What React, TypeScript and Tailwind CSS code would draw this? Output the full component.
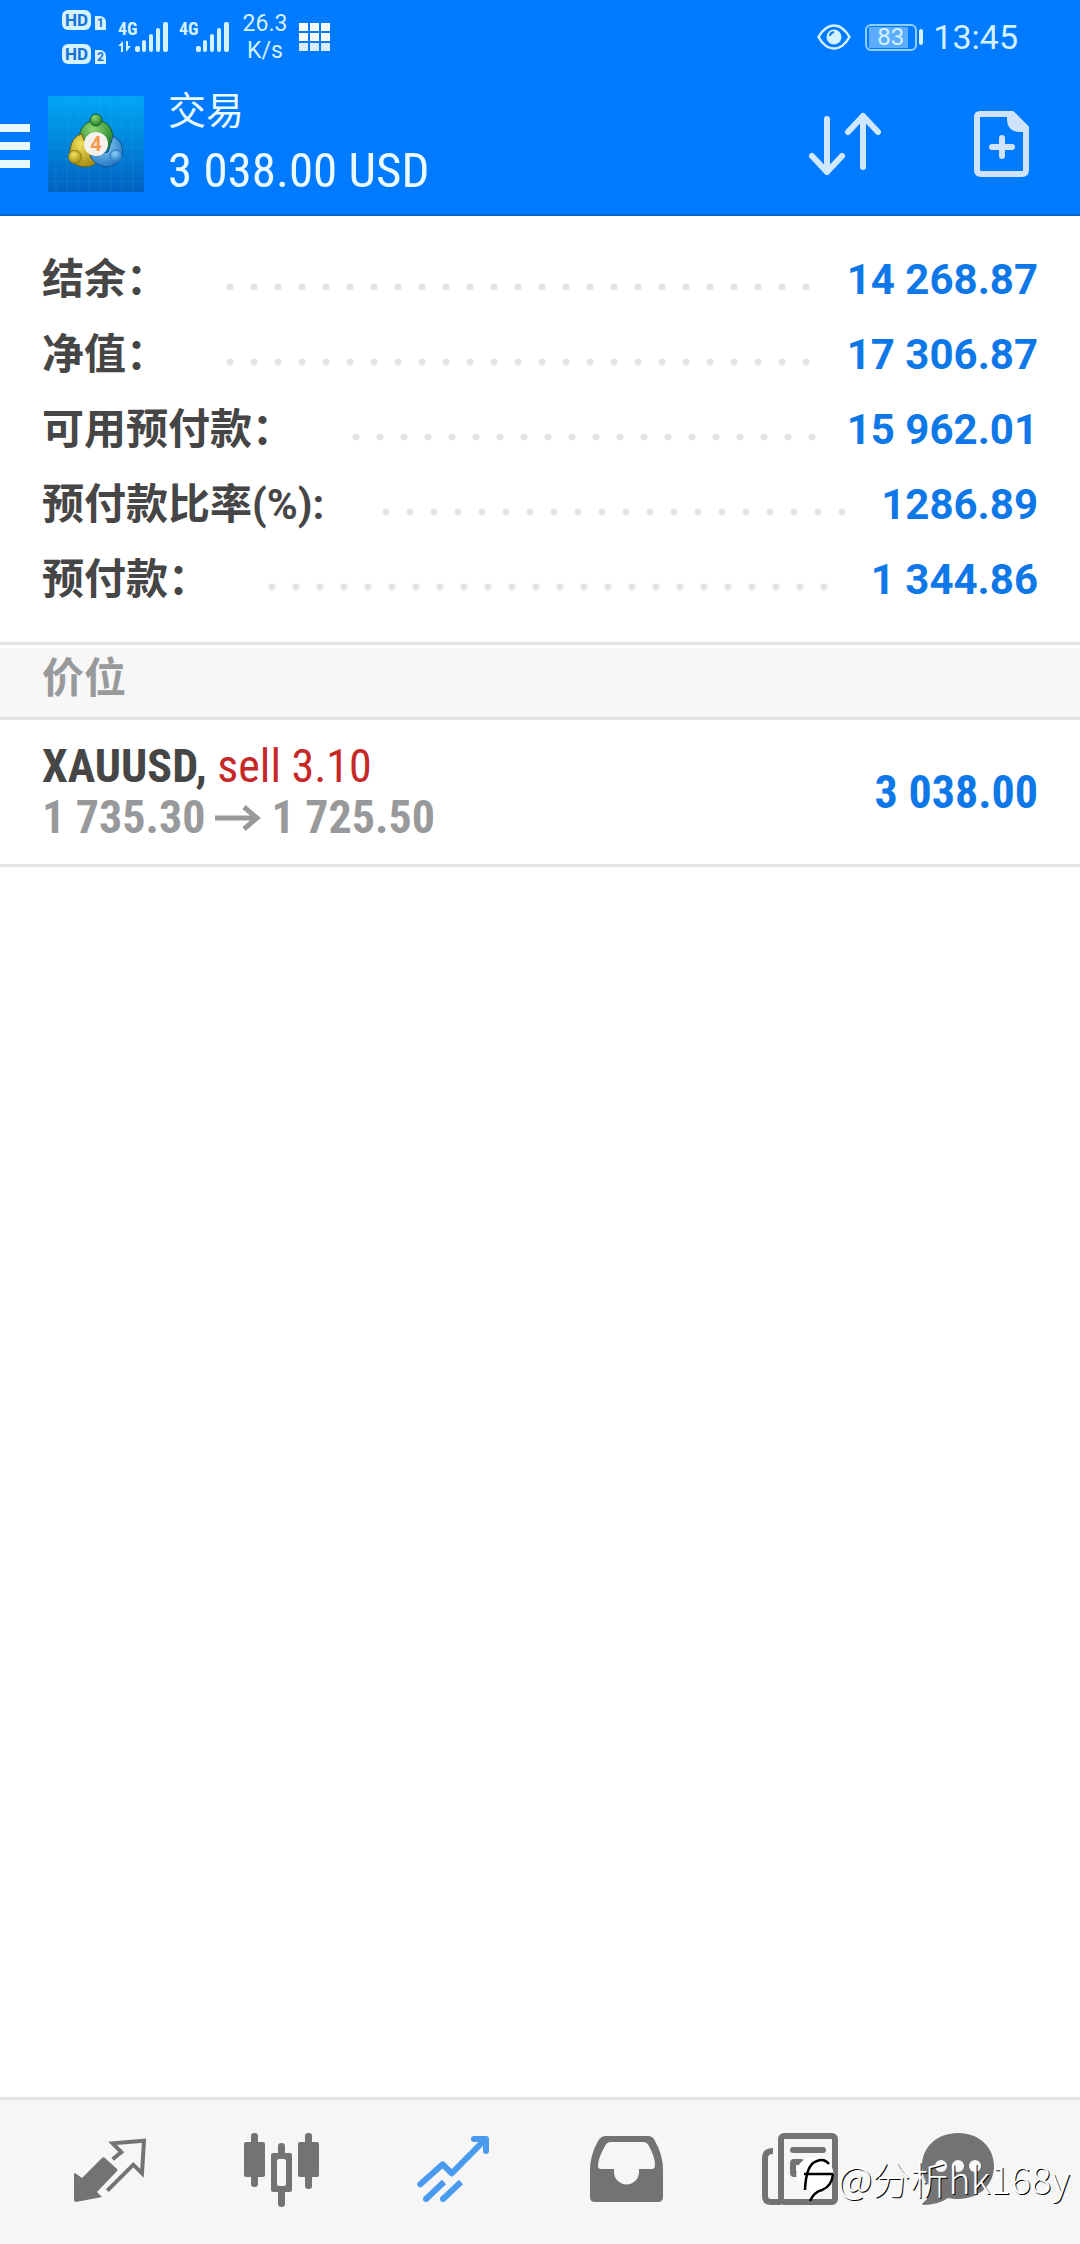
import type { ReactNode } from "react";

const SUMMARY = [
  { label: "结余：", value: "14 268.87" },
  { label: "净值：", value: "17 306.87" },
  { label: "可用预付款：", value: "15 962.01" },
  { label: "预付款比率(%):", value: "1286.89" },
  { label: "预付款：", value: "1 344.86" },
];

const POSITIONS = [
  { symbol: "XAUUSD", side: "sell 3.10", open: "1 735.30", current: "1 725.50", profit: "3 038.00" },
];

function HdBadge({ sim }: { sim: string }) {
  return (
    <div className="flex items-end gap-1">
      <span className="flex h-5 w-[29px] items-center justify-center rounded-md bg-[#d4f1ff] text-[17px] font-bold leading-5 text-[#1473d6]">
        HD
      </span>
      <span className="flex h-[14px] w-[11px] items-center justify-center rounded-tr-md bg-[#d4f1ff] text-[12px] font-bold leading-[14px] text-[#1473d6]">
        {sim}
      </span>
    </div>
  );
}

function Signal({ active }: { active?: boolean }) {
  return (
    <svg viewBox="0 -4 50 40" className="h-10 w-[50px]" fill="#d4f1ff">
      <text x="0" y="14" fontSize="18" fontWeight="700" className="font-['Roboto_Condensed','Liberation_Sans_Narrow',Roboto,sans-serif]">
        4G
      </text>
      {active && <path d="M0 25l5-5v11H3v-6zM8 20v11l5-6H10v-5z" />}
      <rect x="17" y="25" width="5" height="6" rx="2" />
      <rect x="24" y="19" width="4" height="12" rx="2" />
      <rect x="31" y="13" width="4" height="18" rx="2" />
      <rect x="38" y="7" width="4" height="24" rx="2" />
      <rect x="45" y="1" width="5" height="30" rx="2" />
    </svg>
  );
}

function StatusBar() {
  return (
    <div className="flex h-[74px] items-center justify-between px-[62px] text-[#d4f1ff]">
      <div className="flex items-center">
        <div className="flex flex-col gap-[14px]">
          <HdBadge sim="1" />
          <HdBadge sim="2" />
        </div>
        <div className="ml-3 flex gap-[11px]">
          <Signal active />
          <Signal />
        </div>
        <div className="ml-3 w-12 text-center text-[23px] leading-[27px]">
          26.3
          <br />
          K/s
        </div>
        <svg viewBox="0 0 32 29" className="ml-[10px] h-[29px] w-8" fill="#ffffff">
          {[0, 10, 20].map((y) =>
            [0, 11, 22].map((x) => (
              <rect key={`${x}-${y}`} x={x} y={y} width="9" height="8" opacity={y === 20 ? 0.85 : 1} />
            ))
          )}
        </svg>
      </div>
      <div className="flex items-center">
        <svg viewBox="0 0 34 26" className="h-[26px] w-[34px]" fill="none" stroke="#d4f1ff" strokeWidth="2.500">
          <path d="M1.500 13Q8 1.500 17 1.500T32.500 13Q26 24.500 17 24.500T1.500 13Z" />
          <circle cx="17" cy="13" r="7.500" fill="#d4f1ff" stroke="none" />
          <path d="M13 12q0-3 4-4" stroke="#007aff" strokeWidth="2" />
        </svg>
        <div className="ml-[14px] flex h-[27px] w-[52px] items-center rounded-md border-2 border-[#8fcfff] px-[2px]">
          <div className="flex h-[21px] w-[39px] items-center justify-center bg-[#5cadff] pl-1 text-[24px] leading-[21px]">83</div>
        </div>
        <div className="ml-[2px] h-4 w-1 rounded-full bg-[#d4f1ff]" />
        <div className="ml-[10px] text-[34px] leading-10">13:45</div>
      </div>
    </div>
  );
}

function Logo() {
  return (
    <svg viewBox="0 0 96 96" className="h-24 w-24">
      <defs>
        <linearGradient id="sky" x1="0" y1="0" x2="0" y2="1">
          <stop offset="0" stopColor="#00a6f5" />
          <stop offset="1" stopColor="#0062c0" />
        </linearGradient>
        <radialGradient id="green" cx=".4" cy=".3" r=".7">
          <stop offset="0" stopColor="#8fd672" />
          <stop offset="1" stopColor="#1f7f2c" />
        </radialGradient>
        <radialGradient id="gold" cx=".4" cy=".3" r=".7">
          <stop offset="0" stopColor="#f0e05c" />
          <stop offset="1" stopColor="#a78e12" />
        </radialGradient>
        <radialGradient id="blue" cx=".4" cy=".3" r=".7">
          <stop offset="0" stopColor="#8fd0f8" />
          <stop offset="1" stopColor="#2478c4" />
        </radialGradient>
      </defs>
      <rect width="96" height="96" fill="url(#sky)" />
      <path
        d="M8 0V96M19 0V96M30 0V96M41 0V96M52 0V96M63 0V96M74 0V96M85 0V96M0 8H96M0 19H96M0 30H96M0 41H96M0 52H96M0 63H96M0 74H96M0 85H96"
        stroke="#5cc6ff"
        strokeOpacity=".12"
      />
      <path d="M31 40Q34 25 48 24Q63 25 65 40Q66 50 59 54L37 46L31 46Z" fill="url(#green)" stroke="#17602c" />
      <path d="M34 38Q24 40 22 54Q20 66 31 70Q42 73 49 66L40 56Z" fill="url(#gold)" stroke="#6d6417" />
      <path d="M65 40Q77 46 74 60Q69 71 58 71Q47 70 42 60L60 56Z" fill="url(#blue)" stroke="#14528f" />
      <circle cx="48" cy="24" r="6" fill="url(#green)" stroke="#17602c" />
      <circle cx="27" cy="61" r="6.500" fill="url(#gold)" stroke="#8a7c10" />
      <circle cx="68" cy="60" r="6" fill="url(#blue)" stroke="#2a78bf" />
      <circle cx="48" cy="48" r="12" fill="#f4f1ee" />
      <text x="48" y="55" textAnchor="middle" fontSize="20" fontWeight="700" fill="#f59a4a" className="font-[Roboto,sans-serif]">
        4
      </text>
    </svg>
  );
}

function Header() {
  return (
    <header className="border-b-2 border-[#0a67cc] bg-[#007aff]">
      <StatusBar />
      <div className="flex h-[140px] items-center pr-[50px]">
        <button type="button" aria-label="Menu" className="mt-1 flex flex-col gap-[10px]">
          <span className="h-2 w-[30px] bg-[#e8f8ff]" />
          <span className="h-2 w-[30px] bg-[#e8f8ff]" />
          <span className="h-2 w-[30px] bg-[#e8f8ff]" />
        </button>
        <div className="ml-[18px]">
          <Logo />
        </div>
        <div className="ml-6 text-[#eafaff]">
          <h1 className="text-[38px] leading-[54px]">交易</h1>
          <p className="font-['Roboto_Condensed','Liberation_Sans_Narrow',Roboto,sans-serif] text-[49px] leading-[66px]">3 038.00 USD</p>
        </div>
        <div className="ml-auto flex items-center gap-[92px]">
          <button type="button" aria-label="Sort">
            <svg viewBox="0 0 74 64" className="h-16 w-[74px]" fill="none" stroke="#cfe8ff" strokeWidth="6" strokeLinecap="round" strokeLinejoin="round">
              <path d="M19 7V60M4 44L19 60L34 44M55 55V4M40 20L55 4L70 20" />
            </svg>
          </button>
          <button type="button" aria-label="New order">
            <svg viewBox="0 0 56 66" className="h-[66px] w-14">
              <path d="M6 3H38L52 17V59Q52 63 48 63H7Q3 63 3 59V6Q3 3 6 3Z" fill="none" stroke="#cfe3ff" strokeWidth="6" />
              <path d="M33 1H40L54 15V21H45Q33 20 33 8Z" fill="#cfe3ff" />
              <path d="M28 27V45M18 36H38" stroke="#cfe3ff" strokeWidth="6" strokeLinecap="round" />
            </svg>
          </button>
        </div>
      </div>
    </header>
  );
}

function Summary() {
  return (
    <dl className="border-b-[3px] border-[#e4e4e4] px-[42px] pb-[25px] pt-[26px]">
      {SUMMARY.map((row) => (
        <div key={row.label} className="flex h-[75px] items-center text-[42px] font-bold leading-[60px]">
          <dt className="text-[#464646]">{row.label}</dt>
          <span className="ml-[50px] mr-[30px] mt-[14px] h-2 flex-1 bg-[radial-gradient(circle,#e3e3e3_3px,transparent_4px)] bg-[length:24px_8px] bg-repeat-x" />
          <dd className="text-[#0f78e8]">{row.value}</dd>
        </div>
      ))}
    </dl>
  );
}

function Positions() {
  return (
    <section>
      <h2 className="mt-[3px] h-[72px] border-b-[3px] border-[#e4e4e4] bg-[#f7f7f7] px-[42px] text-[42px] font-bold leading-[62px] text-[#98999b]">
        价位
      </h2>
      {POSITIONS.map((p) => (
        <div
          key={p.symbol}
          className="flex h-[147px] items-center justify-between border-b-[3px] border-[#e4e4e4] px-[42px] font-['Roboto_Condensed','Liberation_Sans_Narrow',Roboto,sans-serif] text-[46px] font-bold leading-[51px]"
        >
          <div>
            <div className="text-[#464646]">
              {p.symbol}, <span className="font-normal text-[#c62828]">{p.side}</span>
            </div>
            <div className="flex items-center text-[#98999b]">
              {p.open}
              <svg viewBox="0 0 46 26" className="mx-[10px] h-[26px] w-[46px]" fill="none" stroke="#98999b" strokeWidth="5">
                <path d="M0 13H42M29 2L42 13L29 24" />
              </svg>
              {p.current}
            </div>
          </div>
          <div className="text-[#0f78e8]">{p.profit}</div>
        </div>
      ))}
    </section>
  );
}

const TABS: { name: string; icon: ReactNode }[] = [
  {
    name: "Quotes",
    icon: (
      <>
        <path d="M15 51L22 56L42 36Q43.500 34.500 45 36L57 47Q58 48 57 49L37 70L42 75L16 80Q14 80 14 78V52Z" fill="#737373" />
        <path d="M52.700 37.300L61.300 30L52.700 21.300L84 18.700L82 51.300L73.300 42.700L47.300 68.700" fill="none" stroke="#737373" strokeWidth="4" />
      </>
    ),
  },
  {
    name: "Charts",
    icon: (
      <g fill="#737373">
        <rect x="12" y="20" width="21" height="35" rx="2" />
        <rect x="19" y="11" width="7" height="54" rx="3" />
        <path d="M41 31H58Q60 31 60 33V68Q60 70 58 70H41Q39 70 39 68V33Q39 31 41 31ZM47 37Q45 37 45 39V62Q45 64 47 64H52Q54 64 54 62V39Q54 37 52 37Z" fillRule="evenodd" />
        <path d="M46 32V24Q46 21 49.500 21T53 24V32ZM46 69V82Q46 85 49.500 85T53 82V69Z" />
        <rect x="66" y="20" width="21" height="35" rx="2" />
        <rect x="73" y="11" width="7" height="56" rx="3" />
      </g>
    ),
  },
  {
    name: "Trade",
    icon: (
      <g fill="none" stroke="#4a9bf0" strokeWidth="6">
        <path d="M16.300 62.300L38.700 42.300L47.700 51.300L80 18.700M70 17H82V29" strokeLinecap="round" strokeLinejoin="round" />
        <path d="M22 77L40 60M39 77L57 60" />
        <path d="M22 77h0M39 77h0" strokeLinecap="round" />
      </g>
    ),
  },
  {
    name: "History",
    icon: (
      <path
        d="M30 14H72Q77 14 79 19Q87 33 87 48V75Q87 80 82 80H19Q14 80 14 75V48Q14 33 22 19Q25 14 30 14ZM35 20Q31 20 29 24Q22 36 22 44Q22 47 25 47H38V50A12.500 12.500 0 0 0 63 50V47H76Q79 47 79 43Q79 35 73 24Q71 20 67 20Z"
        fill="#737373"
        fillRule="evenodd"
      />
    ),
  },
  {
    name: "News",
    icon: (
      <g fill="none" stroke="#737373" strokeWidth="6">
        <rect x="33" y="14" width="54" height="66" rx="3" />
        <path d="M25 29Q17 29 17 36V74Q17 80 23 80H33" />
        <path d="M45 28H75M65 40H75M65 50H75" strokeLinecap="round" />
        <rect x="45" y="40" width="9" height="12" rx="1" />
      </g>
    ),
  },
  {
    name: "Messages",
    icon: (
      <>
        <path d="M38 11C59 11 74 25 74 44S59 77 38 77Q33 77 28 76Q18 83 3 83Q1 82 4 80Q11 75 10 65Q2 56 2 44C2 25 17 11 38 11Z" fill="#737373" />
        <g fill="#f6f6f6">
          <circle cx="21" cy="44" r="6" />
          <circle cx="38" cy="44" r="6" />
          <circle cx="55" cy="44" r="6" />
        </g>
      </>
    ),
  },
];

function BottomNav() {
  return (
    <nav className="relative flex h-[147px] items-center border-t-[3px] border-[#e4e4e4] bg-[#f6f6f6] px-6">
      {TABS.map((tab) => (
        <button key={tab.name} type="button" aria-label={tab.name} className="flex flex-1 justify-center">
          <svg viewBox="0 0 100 100" className="h-[100px] w-[100px]">
            {tab.icon}
          </svg>
        </button>
      ))}
      <div className="pointer-events-none absolute bottom-[38px] right-[10px] flex items-center font-['Noto_Sans_CJK_SC',sans-serif] text-[38px] font-light leading-[56px] text-white [text-shadow:1px_1px_0_#000]">
        <svg viewBox="0 0 42 48" className="h-12 w-[42px]">
          <path d="M20 3A17 17 0 0 1 30 34Q24 42 14 46L15 37A17 17 0 0 1 20 3Z" fill="#ffffff" />
          <path d="M8 20H37M9 36Q10 10 21 7Q28 4 33 10M37 20Q36 32 26 36Q18 38 14 47" fill="none" stroke="#000000" strokeWidth="2.500" />
        </svg>
        @分析hk168y
      </div>
    </nav>
  );
}

export default function App() {
  return (
    <div className="flex min-h-screen flex-col bg-white font-[Roboto,'Noto_Sans_CJK_SC',sans-serif]">
      <Header />
      <main className="flex-1">
        <Summary />
        <Positions />
      </main>
      <BottomNav />
    </div>
  );
}
